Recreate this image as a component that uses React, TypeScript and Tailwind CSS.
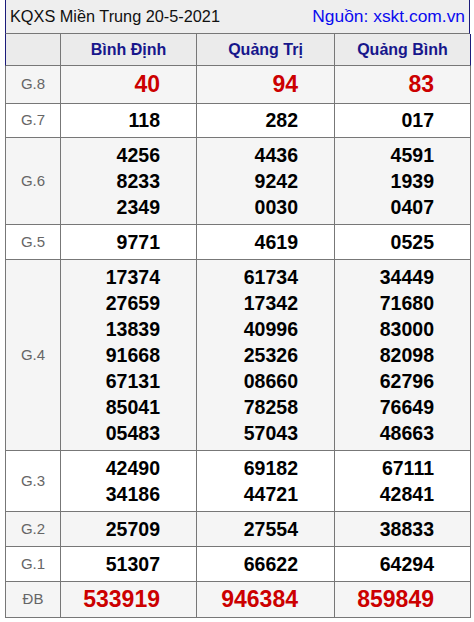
const provinces = ["Bình Định", "Quảng Trị", "Quảng Bình"];

type Row = { label: string; values: string[][]; red?: boolean; lh: string };

const rows: Row[] = [
  { label: "G.8", values: [["40"], ["94"], ["83"]], red: true, lh: "leading-[29px]" },
  { label: "G.7", values: [["118"], ["282"], ["017"]], lh: "leading-[25px]" },
  {
    label: "G.6",
    values: [
      ["4256", "8233", "2349"],
      ["4436", "9242", "0030"],
      ["4591", "1939", "0407"],
    ],
    lh: "leading-[26px]",
  },
  { label: "G.5", values: [["9771"], ["4619"], ["0525"]], lh: "leading-[26px]" },
  {
    label: "G.4",
    values: [
      ["17374", "27659", "13839", "91668", "67131", "85041", "05483"],
      ["61734", "17342", "40996", "25326", "08660", "78258", "57043"],
      ["34449", "71680", "83000", "82098", "62796", "76649", "48663"],
    ],
    lh: "leading-[26px]",
  },
  {
    label: "G.3",
    values: [
      ["42490", "34186"],
      ["69182", "44721"],
      ["67111", "42841"],
    ],
    lh: "leading-[26px]",
  },
  { label: "G.2", values: [["25709"], ["27554"], ["38833"]], lh: "leading-[26px]" },
  { label: "G.1", values: [["51307"], ["66622"], ["64294"]], lh: "leading-[26px]" },
  { label: "ĐB", values: [["533919"], ["946384"], ["859849"]], red: true, lh: "leading-[27px]" },
];

export default function App() {
  return (
    <div className="bg-white w-[474px] h-[622px] font-['Liberation_Sans',Arial,sans-serif]">
      <div className="ml-[5px] w-[465px]">
        {/* title */}
        <div className="flex h-[34px] items-center justify-between border-x border-b border-x-[#1b1b7a] border-b-[#777] bg-[#eeeeee] pl-[4px] pr-[4px]">
          <span className="text-[16.3px] text-[#111]">KQXS Miền Trung 20-5-2021</span>
          <span className="text-[17.4px] text-[#0a0aee]">Nguồn: xskt.com.vn</span>
        </div>

        <div className="grid grid-cols-[55px_136px_138px_136px] border-l border-[#777]">
          {/* header */}
          <div className="h-[32px] border-r border-b border-[#777] bg-[#ebebeb] border-l border-l-[#1b1b7a] -ml-px w-[56px]" />
          {provinces.map((p, i) => (
            <div
              key={p}
              className={
                "flex h-[32px] items-center justify-center border-b bg-[#ebebeb] text-[16px] font-bold text-[#17178c] " +
                (i === 2 ? "border-r border-r-[#1b1b7a] border-b-[#777]" : "border-r border-[#777]")
              }
            >
              {p}
            </div>
          ))}

          {rows.map((r, ri) => {
            const bg = ri % 2 === 0 ? "bg-[#f5f5f5]" : "bg-white";
            return [
              <div
                key={r.label}
                className={`flex items-center justify-center border-r border-b border-[#777] text-[15px] text-[#666] ${bg}`}
              >
                {r.label}
              </div>,
              ...r.values.map((col, ci) => (
                <div
                  key={r.label + ci}
                  className={`flex flex-col items-end justify-center border-r border-b border-[#777] py-[4px] pr-[36px] font-bold ${r.lh} ${bg} ${
                    r.red ? "text-[23px] text-[#cc0000]" : "text-[19.5px] text-black"
                  }`}
                >
                  {col.map((n, k) => (
                    <span key={k}>{n}</span>
                  ))}
                </div>
              )),
            ];
          })}
        </div>
      </div>
    </div>
  );
}
